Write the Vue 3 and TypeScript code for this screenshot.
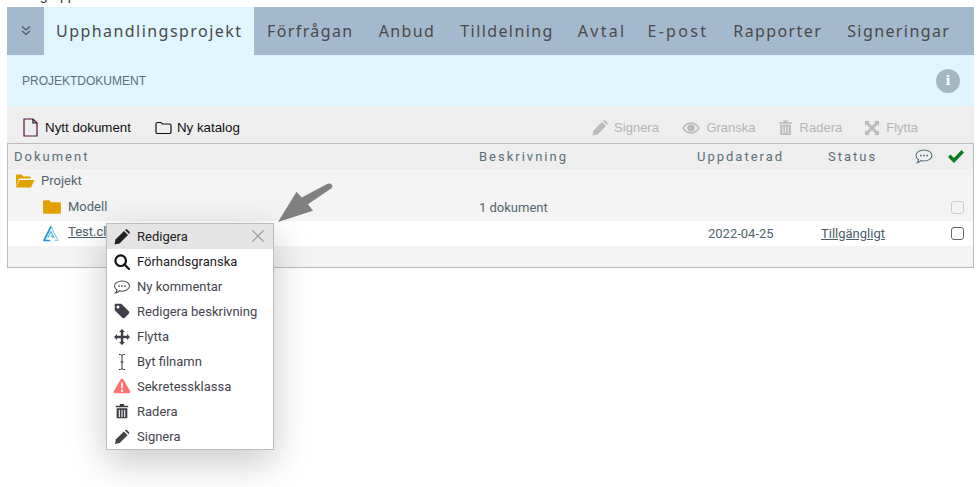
<script setup lang="ts">
const tabs = ['Förfrågan', 'Anbud', 'Tilldelning', 'Avtal', 'E-post', 'Rapporter', 'Signeringar']
</script>

<template>
  <div class="page">
    <div class="clip"><span>Testgrupp</span></div>
    <nav class="nav">
      <div class="toggle">
        <svg width="12" height="12" viewBox="0 0 12 12" fill="none" stroke="#4d5a66" stroke-width="1.3"><path d="M2 1.500l4 3.500 4-3.500M2 6l4 3.500L10 6" /></svg>
      </div>
      <div class="tab active">Upphandlingsprojekt</div>
      <div v-for="t in tabs" :key="t" class="tab">{{ t }}</div>
    </nav>
    <header class="band">
      <span class="band-title">PROJEKTDOKUMENT</span>
      <span class="info">i</span>
    </header>
    <div class="toolbar">
      <div class="tool dark t1">
        <svg width="15" height="19" viewBox="0 0 15 19" fill="none" stroke="#111" stroke-width="1.2"><path d="M1 1h9l4 4v13H1z" stroke="#5a1040" /><path d="M10 1v4h4" /></svg>
        <span>Nytt dokument</span>
      </div>
      <div class="tool dark t2">
        <svg width="17" height="14" viewBox="0 0 17 14" fill="none" stroke="#111" stroke-width="1.2"><path d="M1 3a1.500 1.500 0 0 1 1.500-1.500h3.500l1.500 1.500h7A1.500 1.500 0 0 1 16 4.500v6.500a1.500 1.500 0 0 1-1.500 1.500h-12A1.500 1.500 0 0 1 1 11z" /></svg>
        <span>Ny katalog</span>
      </div>
      <div class="spacer"></div>
      <div class="tool muted">
        <svg width="16" height="16" viewBox="0 0 16 16" fill="#bbb"><path d="M.500 15.500l1-5L10 2l4 4-8.500 8.500z" /><path d="M11 1l.8-.6c.4-.3 1-.3 1.400 0l2.400 2.400c.3.400.3 1 0 1.400l-.6.800z" /></svg>
        <span>Signera</span>
      </div>
      <div class="tool muted">
        <svg width="18" height="12" viewBox="0 0 18 12" fill="none" stroke="#bbb" stroke-width="1.400"><path d="M1 6c2-3 5-5 8-5s6 2 8 5c-2 3-5 5-8 5S3 9 1 6z" /><circle cx="9" cy="6" r="3" fill="#bbb" /></svg>
        <span>Granska</span>
      </div>
      <div class="tool muted trash">
        <svg width="13" height="15" viewBox="0 0 12 14" fill="#bbb"><path d="M0 2h4V.5h4V2h4v1.500H0zM1 4.500h10V13a1 1 0 0 1-1 1H2a1 1 0 0 1-1-1zM3 6v6.500h1V6zm2.500 0v6.500h1V6zM8 6v6.500h1V6z" fill-rule="evenodd" /></svg>
        <span>Radera</span>
      </div>
      <div class="tool muted move">
        <svg width="14" height="14" viewBox="0 0 14 14" fill="#bbb"><path d="M0 0h5L3.500 1.500 7 5l3.500-3.500L9 0h5v5l-1.500-1.500L9 7l3.500 3.500L14 9v5H9l1.500-1.500L7 9l-3.500 3.500L5 14H0V9l1.500 1.500L5 7 1.500 3.500 0 5z" /></svg>
        <span>Flytta</span>
      </div>
    </div>
    <section class="table">
      <div class="row head">
        <div class="c-doc">Dokument</div>
        <div class="c-desc">Beskrivning</div>
        <div class="c-upd">Uppdaterad</div>
        <div class="c-stat">Status</div>
        <div class="c-com">
          <svg width="18" height="15" viewBox="0 0 18 15" fill="none" stroke="#54707a" stroke-width="1.100"><path d="M9 1c4.400 0 8 2.500 8 5.500S13.400 12 9 12c-1 0-2-.1-2.900-.4C5 12.800 3.500 13.600 2 13.800c.9-.9 1.500-2 1.600-3.100C2 9.700 1 8.200 1 6.500 1 3.500 4.600 1 9 1z" /><circle cx="5.800" cy="6.500" r=".9" fill="#54707a" stroke="none" /><circle cx="9" cy="6.500" r=".9" fill="#54707a" stroke="none" /><circle cx="12.200" cy="6.500" r=".9" fill="#54707a" stroke="none" /></svg>
        </div>
        <div class="c-chk">
          <svg width="16" height="13" viewBox="0 0 16 13" fill="#0a7a1e"><path d="M0 7l2.500-2.500L6 8l7.500-8L16 2.500 6 13z" /></svg>
        </div>
      </div>
      <div class="row folder-row top">
        <svg class="ic0" width="20" height="16" viewBox="0 0 20 15" fill="#e0a200"><path d="M1 13V2.200C1 1.500 1.500 1 2.200 1h4.300l2 2h6c.7 0 1.200.5 1.200 1.200V5H5.500C4.600 5 3.800 5.500 3.400 6.300z" /><path d="M4.200 6.500h15.300L16 14H.8z" /></svg>
        <span>Projekt</span>
      </div>
      <div class="row folder-row model">
        <div class="c-doc indent">
          <svg width="18" height="16" viewBox="0 0 18 15.500" fill="#e0a200"><path d="M0 2.500C0 1.500.7 1 1.500 1h4.700l2 2h8.300c.8 0 1.500.6 1.500 1.500v8.500c0 .9-.7 1.500-1.500 1.500h-15C.7 14.500 0 13.900 0 13z" /></svg>
          <span>Modell</span>
        </div>
        <div class="c-desc plain">1 dokument</div>
        <div class="box disabled"></div>
      </div>
      <div class="row file">
        <div class="c-doc indent">
          <svg width="16" height="17" viewBox="0 0 16 17" fill="none" stroke-linejoin="round" stroke-linecap="round"><path d="M6.500 15.500H1L8 1.500" stroke="#2196d8" stroke-width="1.700" /><path d="M8 1.500l7 14h-3" stroke="#86d0ee" stroke-width="1.200" /><path d="M5 12.500L8 6.500l3 6-3-1.500" stroke="#47b2e0" stroke-width="1.100" /></svg>
          <a class="file-name">Test.cl</a>
        </div>
        <div class="c-date">2022-04-25</div>
        <a class="c-status">Tillgängligt</a>
        <div class="box"></div>
      </div>
    </section>

    <svg class="arrow" width="56" height="44" viewBox="0 0 56 44" fill="#808080"><path d="M53 1.500c1.300.3 2.300 1.400 2.300 2.700 0 .9-.5 1.700-1.200 2.200L31 22.200l5 6.500L1 40 19.500 9.800l5.300 5.700L50 2c1-.5 2-.7 3-.5z" /></svg>

    <div class="menu">
      <div class="item first">
        <svg class="mi" width="16" height="16" viewBox="0 0 16 16" fill="#222"><path d="M.500 15.500l1-5L10 2l4 4-8.500 8.500z" /><path d="M11 1l.8-.6c.4-.3 1-.3 1.400 0l2.400 2.400c.3.400.3 1 0 1.400l-.6.800z" /></svg>
        <span class="dk">Redigera</span>
        <svg class="close" width="12" height="12" viewBox="0 0 12 12" stroke="#999" stroke-width="1.200"><path d="M.5.500l11 11M11.500.500l-11 11" /></svg>
      </div>
      <div class="item">
        <svg class="mi" width="16" height="16" viewBox="0 0 16 16" fill="none" stroke="#111" stroke-width="2.200"><circle cx="6.700" cy="6.700" r="5.300" /><path d="M10.500 10.500L15 15" stroke-linecap="round" /></svg>
        <span class="dk">Förhandsgranska</span>
      </div>
      <div class="item">
        <svg class="mi" width="17" height="14" viewBox="0 0 18 15" fill="none" stroke="#444" stroke-width="1.100"><path d="M9 1c4.400 0 8 2.500 8 5.500S13.400 12 9 12c-1 0-2-.1-2.900-.4C5 12.800 3.500 13.600 2 13.800c.9-.9 1.500-2 1.600-3.100C2 9.700 1 8.200 1 6.500 1 3.500 4.600 1 9 1z" /><circle cx="5.800" cy="6.500" r=".9" fill="#444" stroke="none" /><circle cx="9" cy="6.500" r=".9" fill="#444" stroke="none" /><circle cx="12.200" cy="6.500" r=".9" fill="#444" stroke="none" /></svg>
        <span>Ny kommentar</span>
      </div>
      <div class="item">
        <svg class="mi up" width="15" height="15" viewBox="0 0 15 15" fill="#3f3f4a"><path d="M0 1.500C0 .7.700 0 1.500 0H6.500l8 8c.6.600.6 1.500 0 2.100l-4.400 4.400c-.6.600-1.500.6-2.100 0l-8-8zM3.500 5a1.500 1.500 0 1 0 0-3 1.500 1.500 0 0 0 0 3z" fill-rule="evenodd" /></svg>
        <span>Redigera beskrivning</span>
      </div>
      <div class="item">
        <svg class="mi" width="16" height="16" viewBox="0 0 16 16" fill="#3f3f4a"><path d="M8 0l3 3H9.200v3.800H13V5l3 3-3 3V9.200H9.200V13H11l-3 3-3-3h1.800V9.200H3V11L0 8l3-3v1.800h3.800V3H5z" /></svg>
        <span>Flytta</span>
      </div>
      <div class="item">
        <svg class="mi" width="8" height="16" viewBox="0 0 8 16" fill="none" stroke="#333" stroke-width="1"><path d="M1 .5h1.500C3.300.5 4 1 4 2v12c0 1 .7 1.500 1.500 1.500H7M7 .5H5.500C4.700.5 4 1 4 2M1 15.500h1.500C3.300 15.500 4 15 4 14M2.500 8h3" /></svg>
        <span>Byt filnamn</span>
      </div>
      <div class="item">
        <svg class="mi up" width="17" height="15" viewBox="0 0 17 15" fill="#ff7272"><path d="M8.500 0c.6 0 1.100.3 1.400.8l6.800 12c.6 1-.1 2.200-1.300 2.200H1.600C.4 15-.3 13.800.3 12.800l6.800-12C7.400.3 7.900 0 8.500 0zM7.500 4l.3 6h1.400l.3-6zM8.500 11a1.200 1.200 0 1 0 0 2.400 1.200 1.200 0 0 0 0-2.400z" fill-rule="evenodd" /></svg>
        <span>Sekretessklassa</span>
      </div>
      <div class="item">
        <svg class="mi up" width="13" height="15" viewBox="0 0 12 14" fill="#3f3f4a"><path d="M0 2h4V.5h4V2h4v1.500H0zM1 4.500h10V13a1 1 0 0 1-1 1H2a1 1 0 0 1-1-1zM3 6v6.500h1V6zm2.500 0v6.500h1V6zM8 6v6.500h1V6z" fill-rule="evenodd" /></svg>
        <span>Radera</span>
      </div>
      <div class="item">
        <svg class="mi" width="15" height="15" viewBox="0 0 16 16" fill="#444"><path d="M.500 15.500l1-5L10 2l4 4-8.500 8.500z" /><path d="M11 1l.8-.6c.4-.3 1-.3 1.400 0l2.400 2.400c.3.400.3 1 0 1.400l-.6.800z" /></svg>
        <span>Signera</span>
      </div>
    </div>
  </div>
</template>

<style scoped>
.page {
  position: relative;
  width: 980px;
  height: 487px;
  overflow: hidden;
  background: #fff;
  font-family: Roboto, sans-serif;
  font-size: 13px;
  color: #53666f;
}
.clip {
  height: 7px;
  overflow: hidden;
  padding-left: 14px;
  font: 14px "Liberation Sans", sans-serif;
  color: #333;
}
.clip span {
  display: block;
  margin-top: -13px;
}
.nav {
  display: flex;
  height: 48px;
  margin: 0 6px 0 7px;
  background: #a3b9cd;
  font-family: "Noto Sans", sans-serif;
  font-size: 16px;
  letter-spacing: 1.400px;
  color: #4a4a4a;
}
.toggle {
  width: 37px;
  display: flex;
  align-items: center;
  justify-content: center;
}
.tab {
  display: flex;
  align-items: center;
  padding: 0 12.500px;
  white-space: nowrap;
}
.tab.active {
  background: #e0f6ff;
  padding: 0 12px;
  letter-spacing: 1.450px;
}
.tab:nth-child(6) {
  letter-spacing: 2.300px;
  padding: 0 10.500px 0 11.500px;
}
.tab:nth-child(7) {
  letter-spacing: 2.300px;
  padding: 0 12.500px 0 10.500px;
}
.band {
  display: flex;
  align-items: center;
  justify-content: space-between;
  height: 51px;
  margin: 0 6px 0 7px;
  padding: 0 14px 0 15px;
  background: #e0f6ff;
}
.band-title {
  font-family: "Liberation Sans", sans-serif;
  font-size: 12px;
  color: #5b7078;
}
.info {
  width: 24px;
  height: 24px;
  border-radius: 50%;
  background: #a2b9c4;
  color: #fff;
  font: bold 13px/24px "DejaVu Serif", serif;
  text-align: center;
}
.toolbar {
  display: flex;
  align-items: center;
  height: 37px;
  margin: 0 6px 0 7px;
  padding: 6px 56px 0 16px;
  box-sizing: border-box;
  background: #eee;
  font-family: "Liberation Sans", sans-serif;
  font-size: 13.330px;
}
.tool {
  display: flex;
  align-items: center;
  gap: 6px;
  margin-left: 23.500px;
  white-space: nowrap;
}
.tool.dark {
  margin-left: 0;
  color: #111;
}
.tool.t1 {
  gap: 7px;
}
.tool.t2 {
  margin-left: 24px;
  gap: 5px;
}
.tool.muted {
  color: #b5b5b5;
  font-size: 13px;
}
.tool.trash {
  gap: 8px;
  margin-left: 23px;
}
.tool.move {
  gap: 7px;
  margin-left: 23px;
}
.spacer {
  flex: 1;
}
.table {
  height: 125px;
  box-sizing: border-box;
  margin: 0 6px 0 7px;
  border: 1px solid #bbb;
  background: #f4f4f4;
  position: relative;
}
.row {
  display: flex;
  align-items: center;
  position: relative;
}
.head {
  height: 25px;
  background: #eee;
  letter-spacing: 2px;
  color: #5a6f78;
}
.c-doc {
  display: flex;
  align-items: center;
  width: 471px;
  padding-left: 6px;
  box-sizing: border-box;
  flex: none;
}
.c-desc {
  width: 218px;
  flex: none;
}
.c-desc.plain {
  letter-spacing: 0;
}
.c-upd {
  width: 131px;
  flex: none;
}
.c-stat {
  width: 87px;
  flex: none;
}
.c-com {
  width: 33px;
  flex: none;
  display: flex;
}
.c-chk {
  display: flex;
}
.folder-row.top {
  height: 25px;
  padding: 0 0 2px 7px;
  box-sizing: border-box;
  gap: 6px;
}
.ic0 {
  flex: none;
}
.model {
  height: 27px;
}
.model .c-doc {
  padding-bottom: 2px;
}
.indent {
  gap: 7px;
  padding-left: 35px;
}
.file {
  height: 25px;
  background: #fff;
}
.file .c-doc {
  gap: 9px;
}
.file-name {
  margin-top: -4px;
}
a {
  color: #4b6069;
  text-decoration: underline;
}
.c-date {
  margin-left: 229px;
  width: 113px;
  flex: none;
}
.c-status {
  flex: none;
}
.box {
  position: absolute;
  right: 9px;
  top: 6px;
  width: 13px;
  height: 13px;
  box-sizing: border-box;
  border: 1px solid #666;
  border-radius: 3px;
  background: #fff;
}
.box.disabled {
  border-color: #ccc;
  background: #f4f4f4;
  top: 7px;
}
.arrow {
  position: absolute;
  left: 277px;
  top: 182px;
}
.menu {
  position: absolute;
  left: 106px;
  top: 223px;
  width: 168px;
  height: 227px;
  box-sizing: border-box;
  border: 1px solid #bbb;
  background: #fff;
  box-shadow: 0 12px 36px rgba(0, 0, 0, 0.22);
  font-size: 13px;
  color: #44444e;
}
.item {
  height: 25px;
  display: flex;
  align-items: center;
  position: relative;
  padding-left: 30px;
}
.item.first {
  background: #e4e4e4;
}
.dk {
  color: #222;
}
.mi {
  position: absolute;
  left: 15px;
  top: 50%;
  transform: translate(-50%, -50%);
}
.mi.up {
  top: 46%;
}
.close {
  position: absolute;
  right: 9px;
  top: 6px;
}
</style>
